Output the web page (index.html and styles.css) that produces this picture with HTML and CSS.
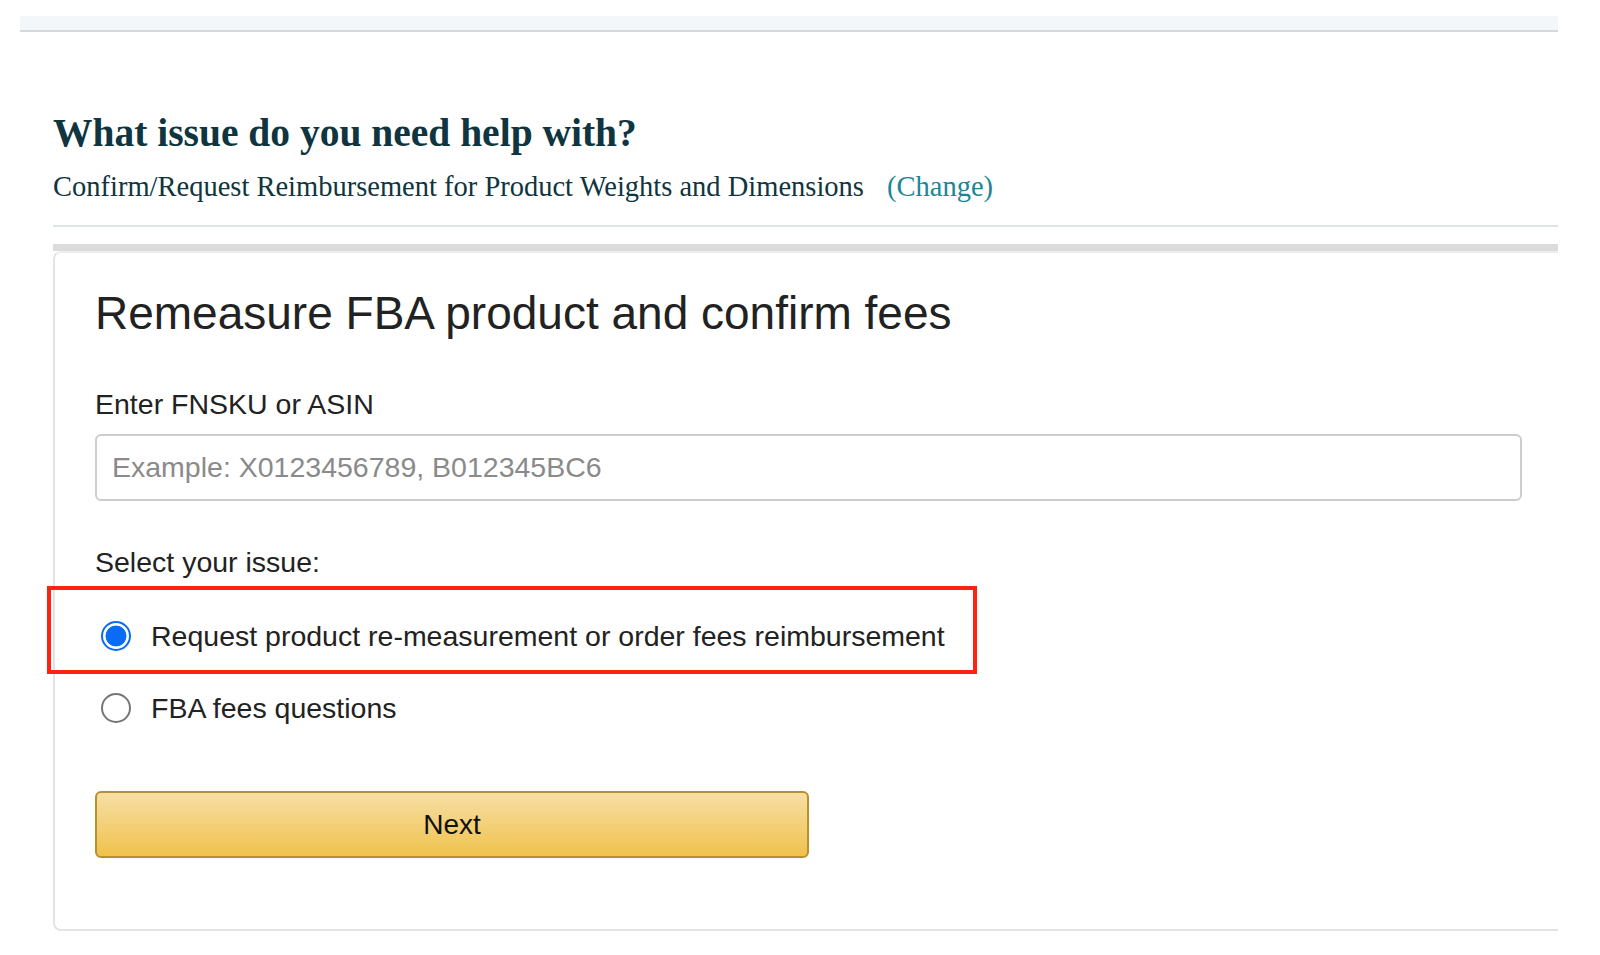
FILE: index.html
```
<!DOCTYPE html>
<html>
<head>
<meta charset="utf-8">
<link rel="stylesheet" href="styles.css">
</head>
<body>
<div class="topbar"></div>
<div class="content">
  <h1 class="issue-title">What issue do you need help with?</h1>
  <div class="issue-sub">
    <span>Confirm/Request Reimbursement for Product Weights and Dimensions</span>
    <a class="change">(Change)</a>
  </div>
  <div class="divider"></div>
  <div class="card-cap"></div>
  <div class="card">
    <h2 class="card-title">Remeasure FBA product and confirm fees</h2>
    <label class="field-label">Enter FNSKU or ASIN</label>
    <input class="field-input" type="text" placeholder="Example: X0123456789, B012345BC6">
    <div class="select-label">Select your issue:</div>
    <div class="option highlighted">
      <span class="radio checked"></span>
      <span class="option-text">Request product re-measurement or order fees reimbursement</span>
    </div>
    <div class="option plain">
      <span class="radio"></span>
      <span class="option-text">FBA fees questions</span>
    </div>
    <button class="next-btn">Next</button>
  </div>
</div>
</body>
</html>
```
FILE: styles.css
```
html, body {
  margin: 0;
  padding: 0;
  background: #fff;
}
body {
  padding: 16px 42px 0 20px;
}
.topbar {
  height: 14px;
  background: #f4f7f9;
  border-bottom: 2px solid #d3d9dc;
}
.content {
  padding-left: 33px;
}
.issue-title {
  margin: 78px 0 0 0;
  font-family: "Liberation Serif", serif;
  font-weight: bold;
  font-size: 39.5px;
  line-height: 46px;
  color: #0f3540;
}
.issue-sub {
  margin-top: 14px;
  font-family: "Liberation Serif", serif;
  font-size: 28.5px;
  line-height: 34px;
  color: #0f3540;
}
.change {
  margin-left: 16px;
  color: #1a8797;
}
.divider {
  margin-top: 21px;
  height: 2px;
  background: #e0e5e5;
}
.card-cap {
  margin-top: 17px;
  height: 7px;
  background: #dcdcdc;
}
.card {
  border-left: 2px solid #e3e3e3;
  border-top: 2px solid #eeeeee;
  border-bottom: 2px solid #e3e3e3;
  border-radius: 8px 0 0 8px;
  padding: 33px 0 71px 40px;
  font-family: "Liberation Sans", Arial, sans-serif;
  color: #222;
}
.card-title {
  margin: 0;
  font-weight: normal;
  font-size: 46px;
  line-height: 54px;
  color: #222;
}
.field-label {
  display: block;
  margin-top: 47px;
  font-size: 28.5px;
  line-height: 34px;
  color: #222;
}
.field-input {
  display: block;
  box-sizing: border-box;
  margin-top: 13px;
  width: 1427px;
  height: 67px;
  border: 2px solid #cdcdcd;
  border-radius: 6px;
  padding: 0 15px;
  font-family: "Liberation Sans", Arial, sans-serif;
  font-size: 28.5px;
  color: #222;
  outline: none;
}
.field-input::placeholder {
  color: #8a8a8a;
}
.select-label {
  margin-top: 44px;
  font-size: 28.5px;
  line-height: 34px;
}
.option {
  display: flex;
  align-items: center;
  gap: 20px;
  width: 930px;
  box-sizing: border-box;
  margin-left: -48px;
  padding-left: 50px;
  border: 4px solid transparent;
  font-size: 28.5px;
  line-height: 34px;
}
.option.highlighted {
  margin-top: 7px;
  padding-top: 29px;
  padding-bottom: 17px;
  border-color: #ff2211;
}
.option.plain {
  margin-top: 13px;
  padding-top: 0;
  padding-bottom: 0;
}
.radio {
  width: 30px;
  height: 30px;
  border-radius: 50%;
  border: 2px solid #767676;
  box-sizing: border-box;
  flex: none;
  background: #fff;
}
.radio.checked {
  border: 2px solid #0a6cf5;
  background: radial-gradient(circle, #0a6cf5 0, #0a6cf5 10px, #fff 10.8px);
}
.option-text {
  color: #222;
}
.next-btn {
  display: block;
  margin-top: 62px;
  width: 714px;
  height: 67px;
  border: 2px solid #b8902e;
  border-radius: 6px;
  background: linear-gradient(to bottom, #f7dfa5, #f0c24c);
  font-family: "Liberation Sans", Arial, sans-serif;
  font-size: 28px;
  color: #111;
}
```
